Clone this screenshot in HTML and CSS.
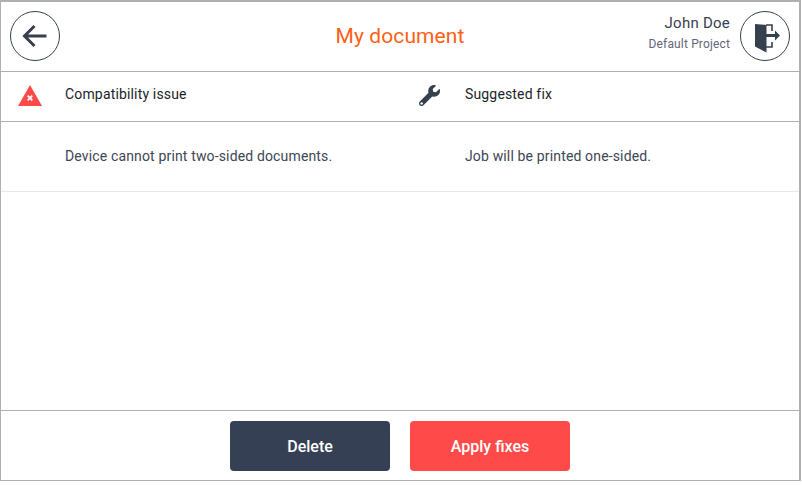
FILE: index.html
```html
<!DOCTYPE html>
<html lang="en">
<head>
<meta charset="utf-8">
<title>My document</title>
<link rel="stylesheet" href="styles.css">
</head>
<body>
<div class="frame">
  <header class="header">
    <button class="round" aria-label="Back">
      <svg width="26" height="24" viewBox="0 0 26 24"><path d="M24.5 12H2.5M12.5 2L2.5 12l10 10" fill="none" stroke="#36404f" stroke-width="3"/></svg>
    </button>
    <h1 class="title">My document</h1>
    <div class="user">
      <div class="user-text">
        <div class="user-name">John Doe</div>
        <div class="user-project">Default Project</div>
      </div>
      <button class="round" aria-label="Log out">
        <svg width="48" height="48" viewBox="0 0 48 48"><path d="M14 12L25.500 13V40.500L14 34.500Z" fill="#36404f"/><path d="M25 13H31V19M31 30V35H25" fill="none" stroke="#36404f" stroke-width="1.600"/><path d="M25 22H34V18.500L39 23.500L34 28.500V25H25Z" fill="#36404f"/></svg>
      </button>
    </div>
  </header>
  <div class="row row-head">
    <div class="cell cell-left">
      <span class="icon">
        <svg width="24" height="21" viewBox="0 0 24 21"><path d="M12 0L24 21H0Z" fill="#ff4a4a"/><path d="M9.700 10.700l4.600 4.600M14.300 10.700l-4.600 4.600" stroke="#fff" stroke-width="1.800"/></svg>
      </span>
      <span class="label">Compatibility issue</span>
    </div>
    <div class="cell cell-right">
      <span class="icon">
        <svg width="21" height="21" viewBox="0 0 512 512"><path fill="#36404f" d="M507.700 109.100c-2.200-9-13.500-12.100-20.100-5.500l-74.400 74.400-67.900-11.300-11.300-67.900 74.400-74.400c6.600-6.600 3.400-17.900-5.700-20.200-47.400-11.700-99.500 1-136.500 38-39.600 39.600-50.900 96.900-34.500 147.100L18.700 403.800c-25 25-25 65.500 0 90.500 25 25 65.500 25 90.500 0l213.100-213.100c50.200 16.500 107.500 5.100 147.100-34.500 37.100-37.100 49.700-89.300 38.300-137.600z"/><circle cx="64" cy="448" r="30" fill="#fff"/></svg>
      </span>
      <span class="label">Suggested fix</span>
    </div>
  </div>
  <div class="row row-body">
    <div class="cell cell-left"><span class="icon"></span><span>Device cannot print two-sided documents.</span></div>
    <div class="cell cell-right"><span class="icon"></span><span>Job will be printed one-sided.</span></div>
  </div>
  <div class="spacer"></div>
  <footer class="footer">
    <button class="btn btn-dark">Delete</button>
    <button class="btn btn-red">Apply fixes</button>
  </footer>
</div>
</body>
</html>
```
FILE: styles.css
```css
* { box-sizing: border-box; }
html, body { margin: 0; padding: 0; background: #fff; }
body { font-family: Roboto, sans-serif; color: #36404f; }
.frame {
  width: 801px;
  height: 481px;
  display: flex;
  flex-direction: column;
  border: 1px solid #b0b0b0;
  border-top-width: 2px;
  border-right-width: 2px;
}
.header {
  height: 70px;
  flex: none;
  display: flex;
  align-items: center;
  justify-content: space-between;
  padding: 0 9px 1px;
  position: relative;
  border-bottom: 1px solid #b0b0b0;
}
.round {
  width: 50px;
  height: 50px;
  padding: 0;
  border: 1px solid #36404f;
  border-radius: 50%;
  background: #fff;
  display: flex;
  align-items: center;
  justify-content: center;
}
.title {
  position: absolute;
  left: 0;
  right: 0;
  top: 0;
  margin: 0;
  line-height: 68px;
  text-align: center;
  font-size: 21px;
  font-weight: 400;
  letter-spacing: 0.1px;
  color: #ff6014;
}
.user { display: flex; align-items: center; gap: 10px; position: relative; }
.user-text { text-align: right; padding-bottom: 7px; }
.user-name { font-size: 15px; line-height: 20px; letter-spacing: 0.25px; color: #36404f; }
.user-project { font-size: 12px; line-height: 18px; margin-top: 2px; letter-spacing: 0.15px; color: #5f6779; }
.row { display: flex; flex: none; }
.row-head { height: 50px; border-bottom: 1px solid #b0b0b0; color: #1a1f2b; font-size: 14px; letter-spacing: 0.16px; }
.row-body { height: 70px; padding-bottom: 2px; border-bottom: 1px solid #e8e8e8; font-size: 14px; letter-spacing: 0.15px; color: #3d4654; }
.cell { display: flex; align-items: center; }
.cell-left { width: 401px; }
.cell-right { width: 396px; }
.icon { width: 64px; flex: none; display: flex; padding-left: 17px; }
.cell-right .icon { width: 63px; padding-left: 17px; }
.row-head .icon { margin-top: -2px; }
.row-head .label { margin-bottom: 6px; }
.spacer { flex: 1; }
.footer {
  height: 70px;
  flex: none;
  display: flex;
  justify-content: center;
  gap: 20px;
  align-items: center;
  border-top: 1px solid #b0b0b0;
}
.btn {
  width: 160px;
  height: 50px;
  padding: 2px 0 0;
  border: 0;
  border-radius: 4px;
  color: #fff;
  font-family: Roboto, sans-serif;
  font-size: 16px;
  font-weight: 500;
}
.btn-dark { background: #364054; }
.btn-red { background: #ff4a4a; }
```
